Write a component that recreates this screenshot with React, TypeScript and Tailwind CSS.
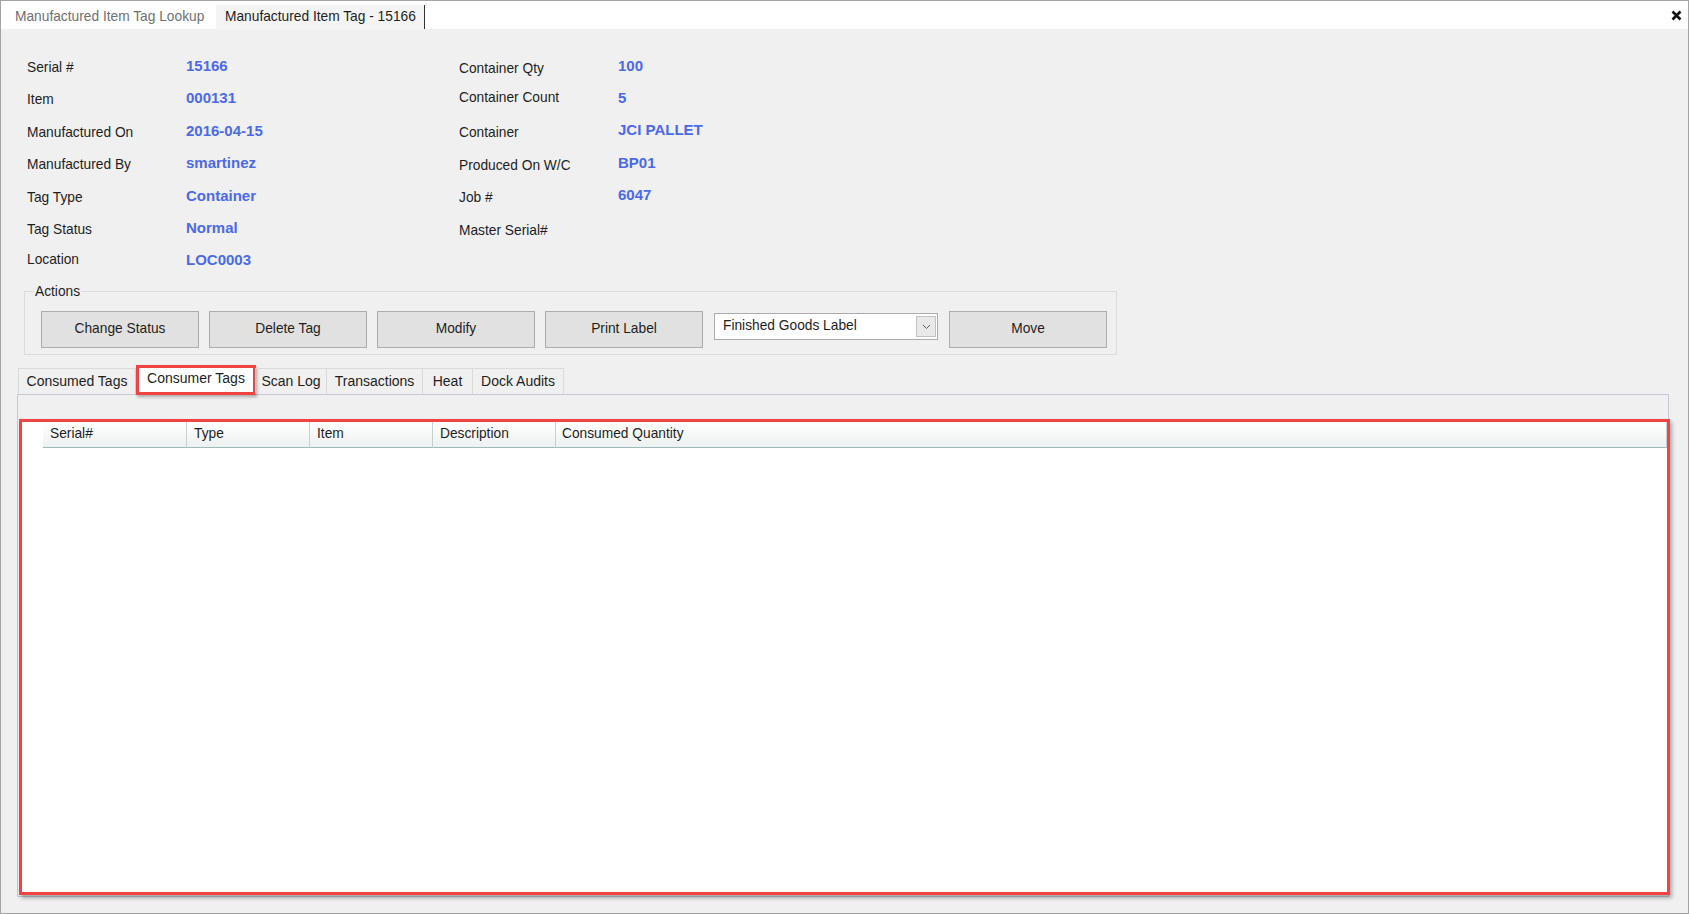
import React from "react";

const leftFields = [
  { label: "Serial #", value: "15166", row: "h-[32.5px]", up: true },
  { label: "Item", value: "000131", row: "h-[32.5px]", up: true },
  { label: "Manufactured On", value: "2016-04-15", row: "h-[32.5px]", up: true },
  { label: "Manufactured By", value: "smartinez", row: "h-[32.5px]", up: true },
  { label: "Tag Type", value: "Container", row: "h-[32.5px]", up: true },
  { label: "Tag Status", value: "Normal", row: "h-[32.5px]", up: true },
  { label: "Location", value: "LOC0003", row: "h-[26px]", up: false },
];

const rightFields = [
  { label: "Container Qty", value: "100", row: "h-[34px]", up: true },
  { label: "Container Count", value: "5", row: "h-[24px]", up: false },
  { label: "Container", value: "JCI PALLET", row: "h-[46px]", up: true },
  { label: "Produced On W/C", value: "BP01", row: "h-[20px]", up: true },
  { label: "Job #", value: "6047", row: "h-[44px]", up: true },
  { label: "Master Serial#", value: "", row: "h-[22px]", up: false },
];

const tabs = [
  { name: "Consumed Tags", w: "w-[118px]" },
  { name: "Consumer Tags", w: "w-[120px]", active: true },
  { name: "Scan Log", w: "w-[72px]" },
  { name: "Transactions", w: "w-[97px]" },
  { name: "Heat", w: "w-[51px]" },
  { name: "Dock Audits", w: "w-[92px]" },
];

const columns = [
  { name: "Serial#", w: "w-[144px]" },
  { name: "Type", w: "w-[123px]" },
  { name: "Item", w: "w-[123px]" },
  { name: "Description", w: "w-[123px]" },
];

type Field = { label: string; value: string; row: string; up: boolean };

const FieldColumn = ({ fields, width }: { fields: Field[]; width: string }) => (
  <div className={`flex flex-col ${width}`}>
    {fields.map((f) => (
      <div key={f.label} className={`flex items-center ${f.row}`}>
        <span className="w-[159px] shrink-0">{f.label}</span>
        <span
          className={`text-[15px] font-bold text-[#4b69e9] ${f.up ? "mb-[5px]" : ""}`}
        >
          {f.value}
        </span>
      </div>
    ))}
  </div>
);

const Btn = ({ children }: { children: React.ReactNode }) => (
  <div className="flex h-[37px] w-[158px] items-center justify-center border border-[#adadad] bg-[#e1e1e1]">
    {children}
  </div>
);

export default function App() {
  return (
    <div className="flex h-[914px] w-[1689px] flex-col overflow-hidden border border-[#a3a3a3] bg-[#f0f0f0] font-['Liberation_Sans',Arial,sans-serif] text-[13.75px] text-[#1e1e1e]">
      {/* document tabs */}
      <div className="flex h-[28px] shrink-0 items-end bg-white">
        <div className="flex h-[24px] w-[215px] items-center pl-[14px] text-[#707070]">
          Manufactured Item Tag Lookup
        </div>
        <div className="flex h-[24px] w-[209px] items-center border-r border-[#333] bg-[#f4f4f4] pl-[9px]">
          Manufactured Item Tag - 15166
        </div>
        <div className="mb-[8px] ml-auto mr-[6px]">
          <svg width="11" height="11" viewBox="0 0 11 11">
            <path d="M1.5 1.5 L9.5 9.5 M9.5 1.5 L1.5 9.5" stroke="#111" strokeWidth="2.6" />
          </svg>
        </div>
      </div>

      {/* header fields */}
      <div className="ml-[26px] mt-[23px] flex h-[221px] shrink-0">
        <FieldColumn fields={leftFields} width="w-[432px]" />
        <FieldColumn fields={rightFields} width="w-[400px]" />
      </div>

      {/* actions group */}
      <div className="relative ml-[23px] mt-[18px] flex h-[64px] w-[1093px] shrink-0 gap-[10px] border border-[#dcdcdc] pl-[16px] pt-[19px]">
        <span className="absolute -top-[10px] left-[9px] bg-[#f0f0f0] px-[1px]">Actions</span>
        <Btn>Change Status</Btn>
        <Btn>Delete Tag</Btn>
        <Btn>Modify</Btn>
        <Btn>Print Label</Btn>
        <div className="ml-[1px] mt-[2px] flex h-[27px] w-[224px] items-center justify-between border border-[#acacac] bg-white pl-[8px] pr-[1px]">
          <span className="mb-[1px]">Finished Goods Label</span>
          <div className="flex h-[21px] w-[20px] items-center justify-center border border-[#c2c2c2] bg-[#e9e9e9]">
            <svg width="9" height="6" viewBox="0 0 9 6">
              <path d="M1 1 L4.5 4.5 L8 1" stroke="#606060" strokeWidth="1" fill="none" />
            </svg>
          </div>
        </div>
        <div className="ml-[1px]">
          <Btn>Move</Btn>
        </div>
      </div>

      {/* tab strip */}
      <div className="relative z-10 ml-[18px] mt-[12px] flex h-[27px] shrink-0 items-end text-[14px]">
        {tabs.map((t) =>
          t.active ? (
            <div
              key={t.name}
              className={`-mb-[1px] flex h-[30px] shrink-0 items-center justify-center border-[3px] border-[#f04444] bg-white pb-[3px] shadow-[1px_2px_3px_rgba(0,0,0,0.3)] ${t.w}`}
            >
              {t.name}
            </div>
          ) : (
            <div
              key={t.name}
              className={`-ml-px flex h-[26px] shrink-0 items-center justify-center border border-b-0 border-[#dadada] ${t.w}`}
            >
              {t.name}
            </div>
          )
        )}
      </div>

      {/* tab page */}
      <div className="ml-[16px] flex h-[503px] w-[1652px] shrink-0 flex-col border border-[#c3cad4] pt-[24px]">
        <div className="ml-[1px] flex h-[476px] w-[1651px] flex-col border-[3px] border-[#f04444] bg-white shadow-[2px_3px_4px_rgba(0,0,0,0.3)]">
          <div className="flex h-[26px] shrink-0">
            <div className="w-[21px] shrink-0" />
            {columns.map((c) => (
              <div
                key={c.name}
                className={`flex shrink-0 items-center border-b border-r border-b-[#9fbaba] border-r-[#c5d0d0] bg-gradient-to-b from-white to-[#eef1f1] pl-[7px] ${c.w}`}
              >
                {c.name}
              </div>
            ))}
            <div className="flex flex-1 items-center border-b border-r border-b-[#9fbaba] border-r-[#c5d0d0] bg-gradient-to-b from-white to-[#eef1f1] pl-[6px]">
              Consumed Quantity
            </div>
          </div>
        </div>
      </div>
    </div>
  );
}
